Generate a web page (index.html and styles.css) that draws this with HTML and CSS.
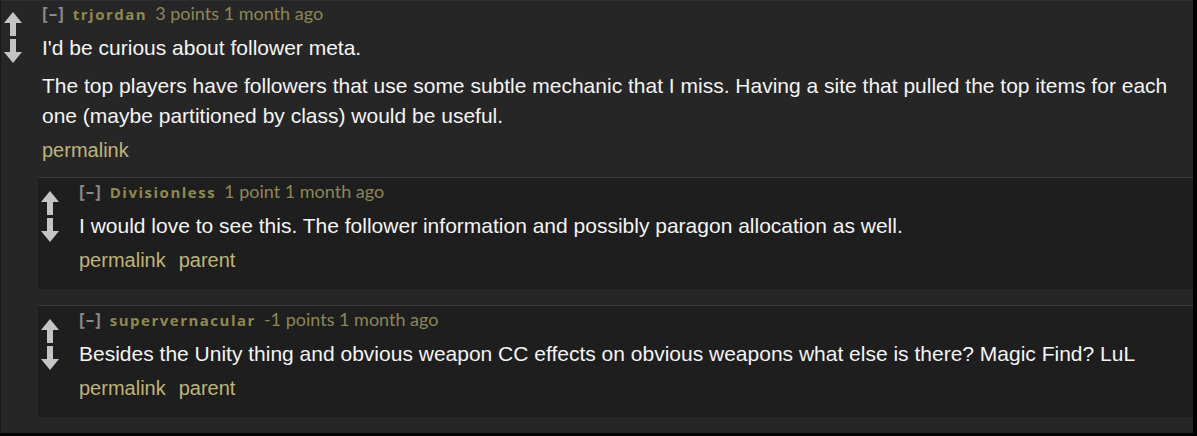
FILE: index.html
```html
<!DOCTYPE html>
<html>
<head>
<meta charset="utf-8">
<link rel="stylesheet" href="styles.css">
</head>
<body>
<div class="frame">
  <div class="comment top">
    <div class="midcol">
      <svg class="arrows" width="18" height="52" viewBox="0 0 18 52"><path d="M9 0 L18 11 L12 11 L12 24 L6 24 L6 11 L0 11 Z" /><path d="M6 27 L12 27 L12 40 L18 40 L9 51 L0 40 L6 40 Z" /></svg>
    </div>
    <div class="entry">
      <div class="tagline"><span class="expand">[–]</span><span class="author">trjordan</span><span class="score">3 points</span> <span class="time">1 month ago</span></div>
      <div class="md">
        <p>I'd be curious about follower meta.</p>
        <p>The top players have followers that use some subtle mechanic that I miss. Having a site that pulled the top items for each one (maybe partitioned by class) would be useful.</p>
      </div>
      <ul class="buttons"><li>permalink</li></ul>
    </div>
  </div>
  <div class="children">
    <div class="comment child">
      <div class="midcol">
        <svg class="arrows" width="18" height="52" viewBox="0 0 18 52"><path d="M9 0 L18 11 L12 11 L12 24 L6 24 L6 11 L0 11 Z" /><path d="M6 27 L12 27 L12 40 L18 40 L9 51 L0 40 L6 40 Z" /></svg>
      </div>
      <div class="entry">
        <div class="tagline"><span class="expand">[–]</span><span class="author">Divisionless</span><span class="score">1 point</span> <span class="time">1 month ago</span></div>
        <div class="md"><p>I would love to see this. The follower information and possibly paragon allocation as well.</p></div>
        <ul class="buttons"><li>permalink</li><li>parent</li></ul>
      </div>
    </div>
    <div class="comment child">
      <div class="midcol">
        <svg class="arrows" width="18" height="52" viewBox="0 0 18 52"><path d="M9 0 L18 11 L12 11 L12 24 L6 24 L6 11 L0 11 Z" /><path d="M6 27 L12 27 L12 40 L18 40 L9 51 L0 40 L6 40 Z" /></svg>
      </div>
      <div class="entry">
        <div class="tagline"><span class="expand">[–]</span><span class="author">supervernacular</span><span class="score">-1 points</span> <span class="time">1 month ago</span></div>
        <div class="md"><p>Besides the Unity thing and obvious weapon CC effects on obvious weapons what else is there? Magic Find? LuL</p></div>
        <ul class="buttons"><li>permalink</li><li>parent</li></ul>
      </div>
    </div>
  </div>
</div>
</body>
</html>
```
FILE: styles.css
```css
html, body {
  margin: 0;
  padding: 0;
  background: #000;
}
.frame {
  width: 1193px;
  height: 433px;
  background: #262626;
  border-left: 1px solid #1a1a1a;
  border-top: 1px solid #2e2e2e;
  box-sizing: border-box;
  font-family: "Liberation Sans", Arial, sans-serif;
  color: #f4f4f4;
}
.comment {
  display: flex;
}
.midcol {
  width: 37px;
  flex: none;
  padding-left: 3px;
  box-sizing: border-box;
}
.top .midcol {
  padding-top: 11px;
}
.arrows path {
  fill: #c4c4c4;
}
.entry {
  flex: 1;
  padding-left: 4px;
}
.tagline {
  height: 24px;
  line-height: 24px;
  font-family: Lato, "Open Sans", sans-serif;
  font-size: 18px;
  color: #8c8755;
  white-space: nowrap;
}
.expand {
  font-family: "Open Sans", sans-serif;
  font-weight: 700;
  font-size: 17px;
  letter-spacing: 1px;
  color: #8a8a8a;
  margin-right: 8px;
}
.author {
  font-family: "Open Sans", sans-serif;
  font-weight: 700;
  font-size: 15px;
  letter-spacing: 1.5px;
  color: #8f8a4c;
  margin-right: 8px;
}
.md {
  margin-top: 8px;
  font-size: 21px;
  line-height: 30px;
}
.md p {
  margin: 0 0 8px 0;
}
.md p:last-child {
  margin-bottom: 0;
}
.buttons {
  list-style: none;
  margin: 4px 0 0 0;
  padding: 0;
  display: flex;
  gap: 13px;
  font-size: 20px;
  line-height: 30px;
  color: #bdb577;
}
.children {
  margin: 12px 0 0 37px;
  display: flex;
  flex-direction: column;
  gap: 16px;
}
.child {
  background: #1e1e1e;
  border-top: 1px solid #3c3c3c;
  padding: 1px 0 14px 0;
}
.child .midcol {
  padding-top: 12px;
}
```
